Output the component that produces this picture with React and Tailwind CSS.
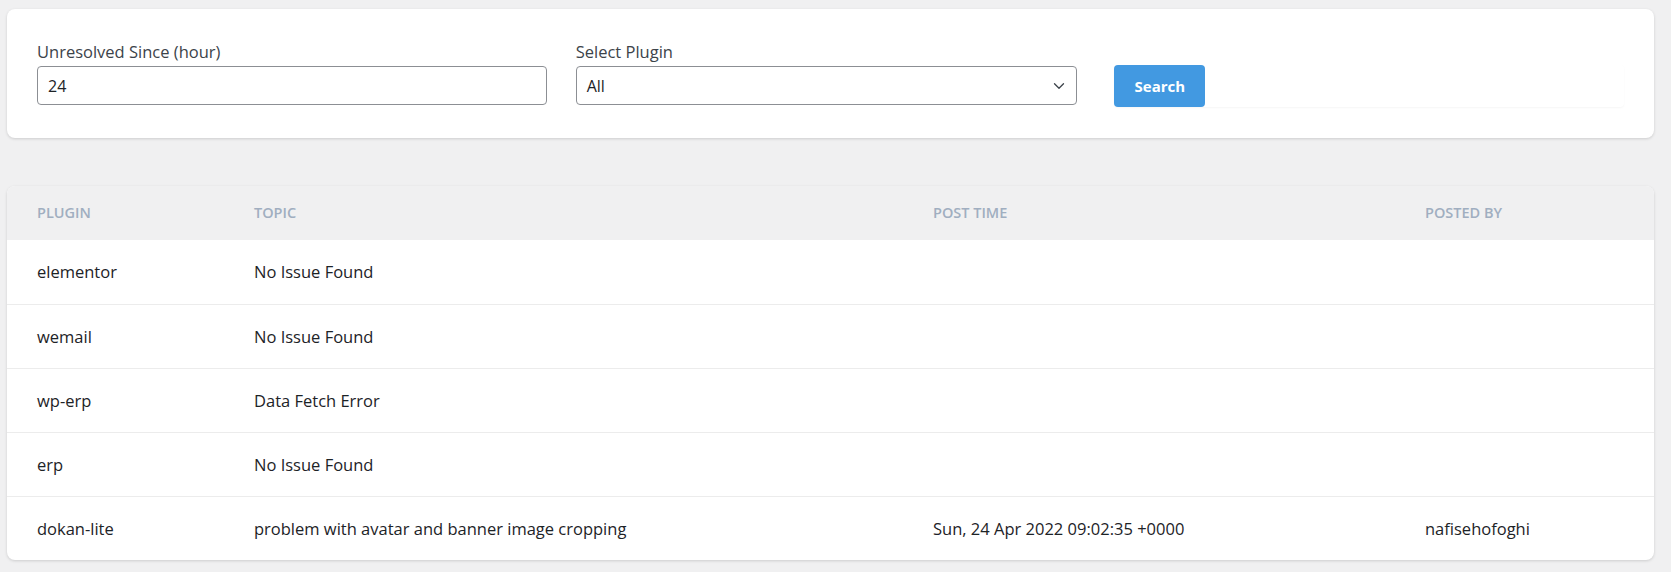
import { ChevronDown } from 'lucide-react';

const rows = [
  { plugin: 'elementor', topic: 'No Issue Found', time: '', by: '' },
  { plugin: 'wemail', topic: 'No Issue Found', time: '', by: '' },
  { plugin: 'wp-erp', topic: 'Data Fetch Error', time: '', by: '' },
  { plugin: 'erp', topic: 'No Issue Found', time: '', by: '' },
  {
    plugin: 'dokan-lite',
    topic: 'problem with avatar and banner image cropping',
    time: 'Sun, 24 Apr 2022 09:02:35 +0000',
    by: 'nafisehofoghi',
  },
];

function App() {
  return (
    <div className="min-h-[572px] bg-[#f0f0f1] pl-[7px] pr-[17px] pt-[9px] pb-3 font-['Open_Sans',sans-serif] text-[#1d2327]">
      <div className="rounded-lg bg-white px-[30px] pt-[31px] pb-[31px] shadow-[0_1px_3px_rgba(0,0,0,0.15)]">
        <div className="grid grid-cols-3 gap-[29px]">
          <div>
            <label className="block text-[16.5px] leading-[24px] text-[#3c434a] mb-[2px]">Unresolved Since (hour)</label>
            <div className="h-[39px] rounded-[4px] border border-[#8c8f94] px-[10px] flex items-center text-[16px]">24</div>
          </div>
          <div>
            <label className="block text-[16.5px] leading-[24px] text-[#3c434a] mb-[2px]">Select Plugin</label>
            <div className="h-[39px] w-[501px] rounded-[4px] border border-[#8c8f94] pl-[10px] pr-[8px] flex items-center justify-between text-[16px]">
              <span>All</span>
              <ChevronDown size={18} strokeWidth={1.75} className="text-[#3c434a]" />
            </div>
          </div>
          <div className="pt-[25px]">
            <div className="h-[42px] rounded-[4px] bg-white shadow-[0_1px_2px_rgba(0,0,0,0.04)] flex items-center">
              <button className="h-[42px] w-[91px] rounded-[4px] bg-[#4299e1] text-white text-[15px] font-bold">Search</button>
            </div>
          </div>
        </div>
      </div>

      <div className="mt-[48px] overflow-hidden rounded-lg bg-white shadow-[0_1px_3px_rgba(0,0,0,0.15)]">
        <table className="w-full border-collapse text-left">
          <thead>
            <tr className="bg-[#f0f0f1] h-[54px] text-[14.5px] font-semibold uppercase text-[#a0aec0]">
              <th className="w-[247px] pl-[30px] font-semibold">Plugin</th>
              <th className="w-[679px] font-semibold">Topic</th>
              <th className="w-[492px] font-semibold">Post Time</th>
              <th className="font-semibold">Posted By</th>
            </tr>
          </thead>
          <tbody className="text-[16.5px]">
            {rows.map((r, i) => (
              <tr key={r.plugin} className={`h-[64px] ${i > 0 ? 'border-t border-[#ececec]' : ''}`}>
                <td className="pl-[30px] pt-[2px]">{r.plugin}</td>
                <td className="pt-[2px]">{r.topic}</td>
                <td className="pt-[2px]">{r.time}</td>
                <td className="pt-[2px]">{r.by}</td>
              </tr>
            ))}
          </tbody>
        </table>
      </div>
    </div>
  );
}

export default App;
